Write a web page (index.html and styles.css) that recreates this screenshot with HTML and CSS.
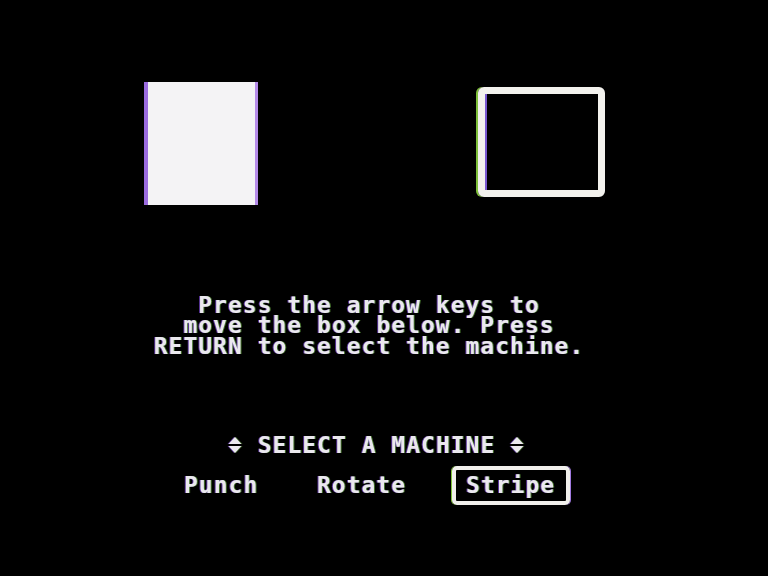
FILE: index.html
```html
<!DOCTYPE html>
<html>
<head>
<meta charset="utf-8">
<link rel="stylesheet" href="styles.css">
</head>
<body>
<div class="screen">
  <div class="machines">
    <div class="card-solid"></div>
    <div class="card-outline"></div>
  </div>
  <div class="prompt">
    <div class="line">Press the arrow keys to</div>
    <div class="line">move the box below. Press</div>
    <div class="line">RETURN to select the machine.</div>
  </div>
  <div class="heading">
    <svg class="arrows" width="15" height="20" viewBox="0 0 15 20"><polygon points="7,2 13.5,9 0.5,9"/><polygon points="0.5,11 13.5,11 7,18"/></svg>
    <span class="line"> SELECT A MACHINE </span>
    <svg class="arrows" width="15" height="20" viewBox="0 0 15 20"><polygon points="7,2 13.5,9 0.5,9"/><polygon points="0.5,11 13.5,11 7,18"/></svg>
  </div>
  <div class="options">
    <span class="opt">Punch</span>
    <span class="opt opt-rotate">Rotate</span>
    <span class="opt opt-selected">Stripe</span>
  </div>
</div>
</body>
</html>
```
FILE: styles.css
```css
html, body {
  margin: 0;
  padding: 0;
  background: #000;
}
.screen {
  width: 768px;
  height: 576px;
  background: #000;
  color: #ebe9ee;
  font-family: "DejaVu Sans Mono", "Liberation Mono", monospace;
  font-weight: bold;
  font-size: 23px;
  letter-spacing: 1px;
  line-height: 20.5px;
  padding-top: 82px;
  box-sizing: border-box;
  overflow: hidden;
  filter: blur(0.45px);
  text-shadow: -1px 0 rgba(150, 90, 255, 0.6), 1px 0 rgba(140, 230, 90, 0.5);
}
.machines {
  display: flex;
  align-items: flex-start;
  padding-left: 144px;
  gap: 220px;
}
.card-solid {
  width: 114px;
  height: 123px;
  background: #f4f3f5;
  box-shadow: inset 4px 0 0 #9b6ce0, inset -3px 0 0 #b48ae8;
}
.card-outline {
  margin-top: 5px;
  width: 127px;
  height: 110px;
  box-sizing: border-box;
  border: 7px solid #f3f2ee;
  border-radius: 6px;
  box-shadow: -2px 0 0 #7fbf3a, inset 2px 0 0 #7a5ad0;
}
.prompt {
  margin-top: 89.6px;
  padding-right: 30px;
  text-align: center;
}
.line {
  white-space: pre;
}
.heading {
  margin-top: 78.5px;
  padding-right: 15px;
  display: flex;
  justify-content: center;
  align-items: center;
  height: 20.5px;
}
.arrows {
  display: block;
  fill: #ebe9ee;
  filter: drop-shadow(-1px 0 rgba(150, 90, 255, 0.6)) drop-shadow(1px 0 rgba(140, 230, 90, 0.4));
}
.options {
  margin-top: 10.9px;
  display: flex;
  align-items: center;
  padding-left: 184px;
  height: 39px;
}
.opt-rotate {
  margin-left: 58.7px;
}
.opt-selected {
  margin-left: 46px;
  border: 4px solid #f1f0ec;
  border-radius: 5px;
  padding: 5.25px 11px 5.25px 10px;
  box-shadow: -1px 0 0 #7fbf3a, 1px 0 0 #a07ae0;
}
```
